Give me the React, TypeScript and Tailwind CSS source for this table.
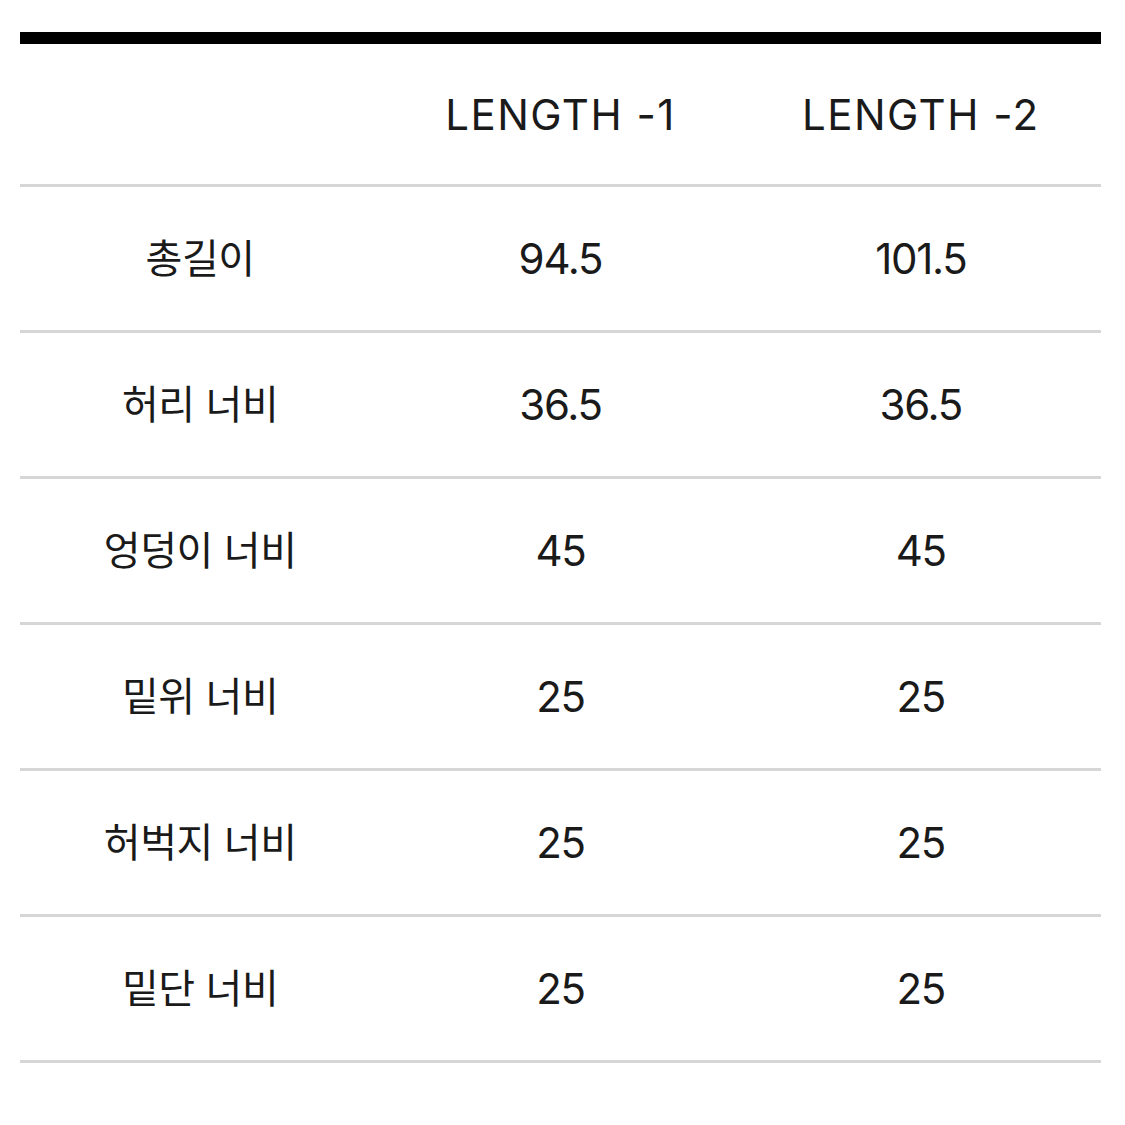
import React from 'react';

const rows: [string, string, string][] = [
  ['총길이', '94.5', '101.5'],
  ['허리 너비', '36.5', '36.5'],
  ['엉덩이 너비', '45', '45'],
  ['밑위 너비', '25', '25'],
  ['허벅지 너비', '25', '25'],
  ['밑단 너비', '25', '25'],
];

export default function App() {
  return (
    <div
      className="w-[1125px] h-[1125px] bg-white pl-[20px] pt-[32px] text-[#1a1a1a]"
      style={{ fontFamily: '"Inter", "Noto Sans CJK KR", sans-serif' }}
    >
      <div className="w-[1081px]">
        <div className="h-[12px] bg-black" />
        <div className="grid grid-cols-3 h-[143px] items-center border-b-[3px] border-[#d6d6d6] text-[42px] tracking-[0.035em]">
          <div />
          <div className="text-center">LENGTH -1</div>
          <div className="text-center">LENGTH -2</div>
        </div>
        {rows.map(([label, a, b]) => (
          <div
            key={label}
            className="grid grid-cols-3 h-[146px] items-center border-b-[3px] border-[#d6d6d6] text-[42px]"
          >
            <div className="text-center text-[40px] tracking-[-0.01em]">{label}</div>
            <div className="text-center tracking-[-0.03em]">{a}</div>
            <div className="text-center tracking-[-0.03em]">{b}</div>
          </div>
        ))}
      </div>
    </div>
  );
}
